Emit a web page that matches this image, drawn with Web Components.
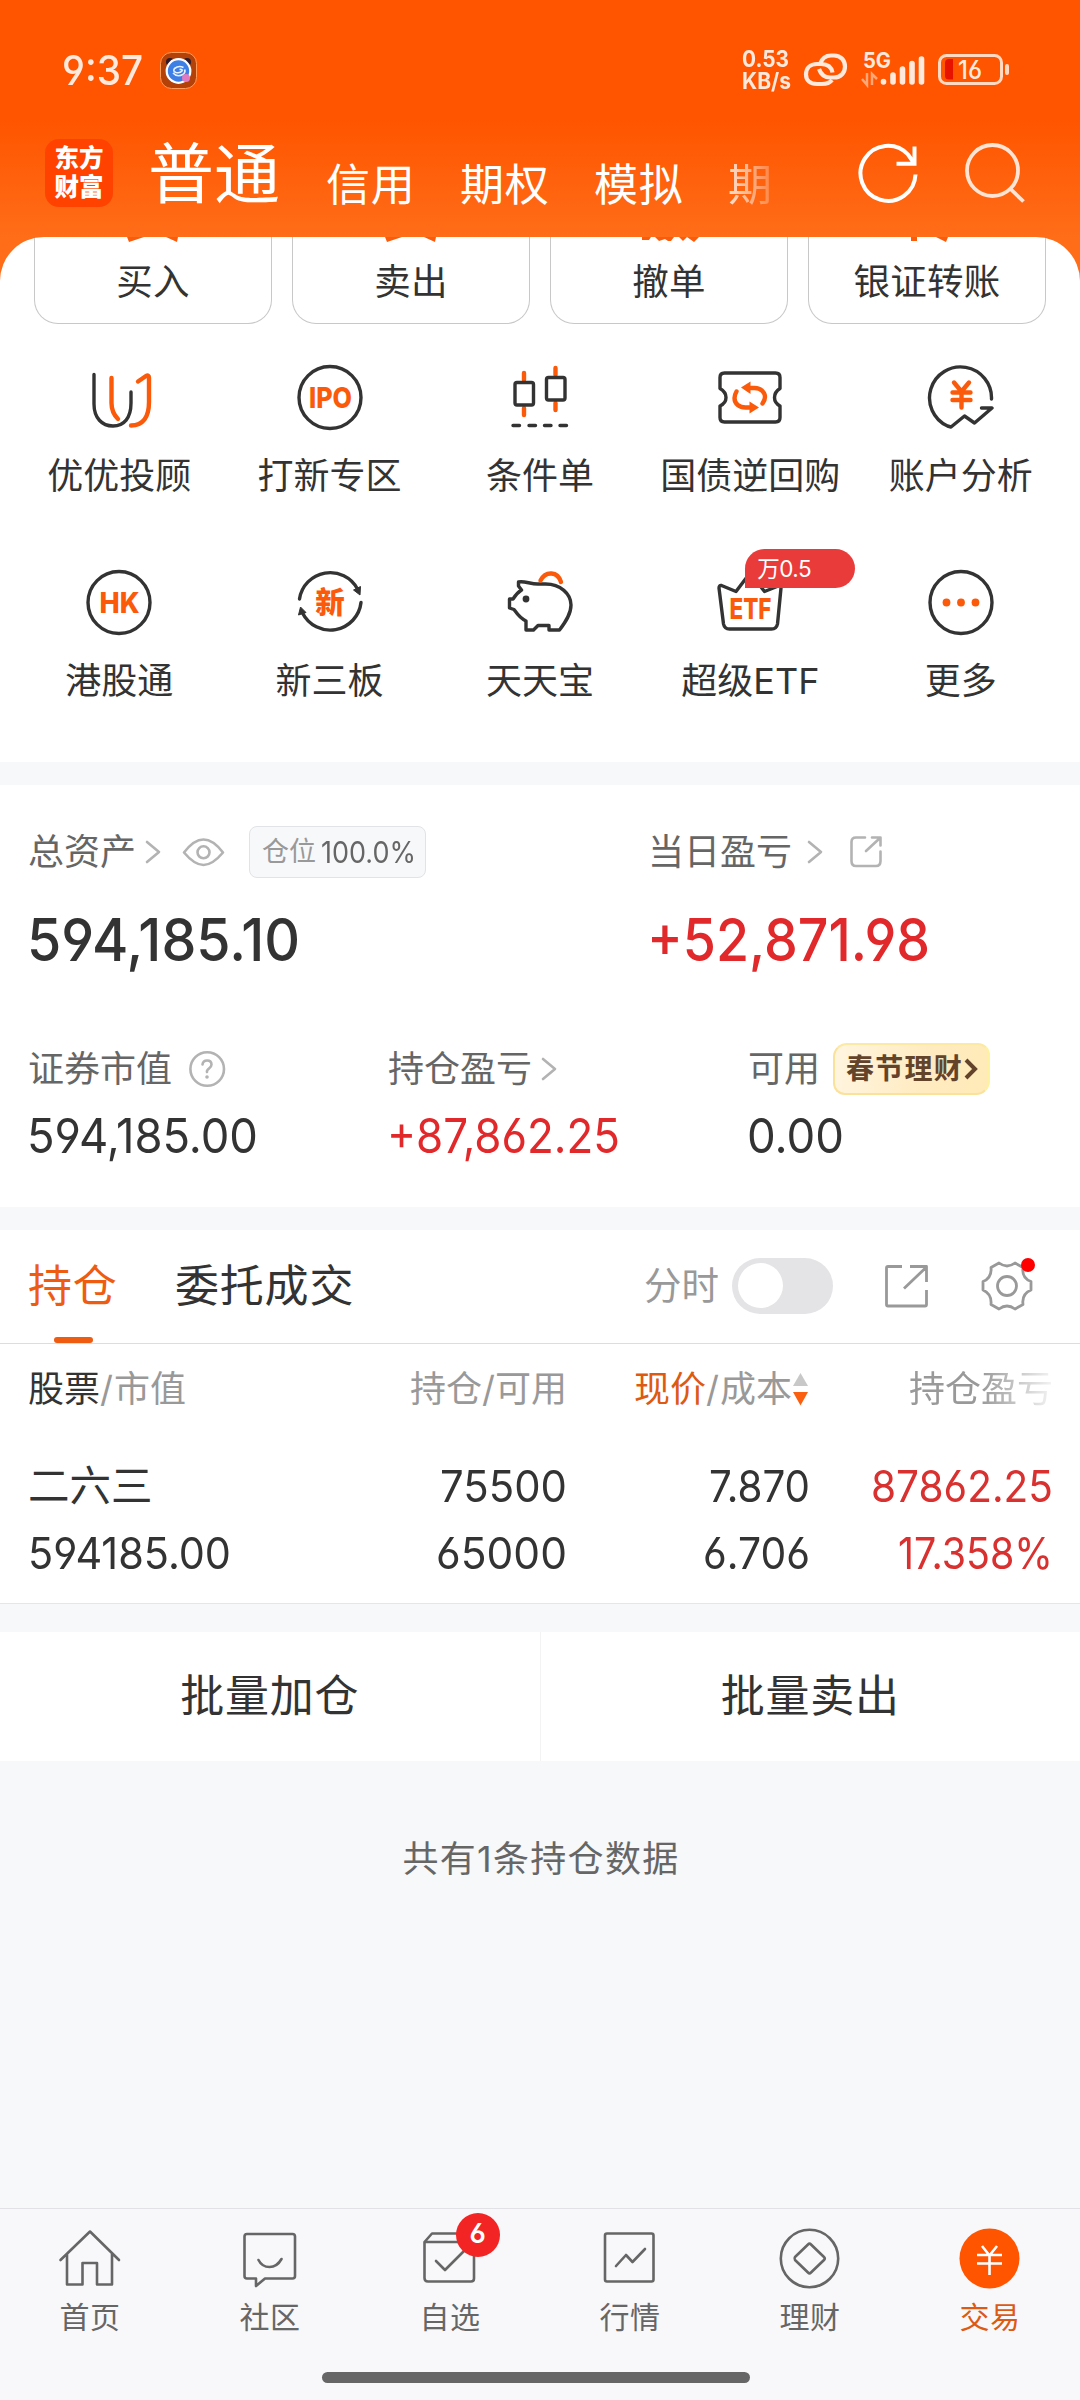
<!DOCTYPE html>
<html lang="zh-CN">
<head>
<meta charset="utf-8">
<title>交易</title>
<style>
html,body{margin:0;padding:0}
body{width:1080px;height:2400px;overflow:hidden;background:#f7f8fa;color:#333;font-family:Inter,"Noto Sans CJK SC",sans-serif;font-size:36px;line-height:48px;font-feature-settings:"cv03","cv04"}
</style>
</head>
<body>
<trade-app></trade-app>
<script>
const define = (name, css, html, extra) => {
  customElements.define(name, class extends HTMLElement {
    constructor() {
      super();
      this.attachShadow({ mode: 'open' }).innerHTML =
        '<style>:host{display:block;box-sizing:border-box}*{box-sizing:border-box}' + css + '</style>' +
        (typeof html === 'function' ? html(this) : html);
    }
    connectedCallback() { if (extra) extra(this); }
  });
};

/* Text run fitted to the advance in its w attribute: Latin text that is too wide
   is condensed, anything else has its letter spacing adjusted. */
define('fit-text', ':host{display:inline-block;white-space:nowrap}span{display:inline-block;transform-origin:0 50%}', '<span><slot></slot></span>', el => {
  const w = +el.getAttribute('w');
  if (el.hasAttribute('size')) el.style.fontSize = el.getAttribute('size') + 'px';
  if (!w) return;
  const r = document.createRange();
  r.selectNodeContents(el);
  const text = el.textContent;
  const natural = r.getBoundingClientRect().width;
  if (natural > w && !/[\u4e00-\u9fff]/.test(text)) {
    el.shadowRoot.querySelector('span').style.transform = `scaleX(${(w / natural).toFixed(4)})`;
  } else {
    el.style.letterSpacing = ((w - natural) / text.length).toFixed(3) + 'px';
  }
  el.style.width = w + 'px';
});

const D = 'fill="none" stroke="#333" stroke-width="3.4" stroke-linecap="round" stroke-linejoin="round"';
const O = 'fill="none" stroke="#fa5a0a" stroke-width="4.4" stroke-linecap="round" stroke-linejoin="round"';
const G = 'fill="none" stroke="#666" stroke-width="2.6" stroke-linecap="round" stroke-linejoin="round"';
const L = 'fill="none" stroke="#b3b3b3" stroke-width="2.6" stroke-linecap="round" stroke-linejoin="round"';
const T = 'fill="#fa5a0a" font-family="Inter,Noto Sans CJK SC,sans-serif" font-weight="800" text-anchor="middle" lengthAdjust="spacingAndGlyphs"';
const ICONS = {
  advisor: ['83 362 70 70', `<path ${D} d="M93 374.500V404C93 418 101 426 112 426S130 418 130 403V392"/><path ${O} d="M110.500 378V403C110.500 410 112 414 117 419M137 381.500L145 376Q148 374.500 148 378V402C148 417 142 425.500 130 425.500"/>`],
  ipo: ['293.500 362 70 70', `<circle ${D} cx="328.500" cy="397.500" r="31"/><text ${T} x="329" y="408" font-size="28.500" textLength="43">IPO</text>`],
  cond: ['504.500 362 70 70', `<path ${O} d="M523.500 373V380M523.500 408V415M555 368V375M555 403V410"/><rect ${D} x="514.500" y="382.500" width="18.500" height="22.500" rx="2"/><rect ${D} x="546" y="377.500" width="18.500" height="22.500" rx="2"/><path ${D} d="M512.500 425.500H519M528.500 425.500H535M544 425.500H550.500M559.500 425.500H566"/>`],
  repo: ['714.500 362 70 70', `<path ${D} d="M724 373H775Q779.500 373 779.500 377.500V388.500Q774 392 774 397.500T779.500 406V417.500Q779.500 422 775 422H724Q719.500 422 719.500 417.500V406Q725.500 403 725.500 397.500T719.500 388.500V377.500Q719.500 373 724 373Z"/><path ${O} d="M750 388H754C761 388 764.500 393 764.500 397Q764.500 400 762 403.500M736 391.500Q734 395 734 398C734 404 739 407.500 745 407.500H749"/><path fill="#fa5a0a" d="M740.500 387.500L750 381.500V394ZM758.500 407.500L749 401.500V413.500Z"/>`],
  analysis: ['924.500 362 70 70', `<path ${D} d="M990 399A31 31 0 1 0 946 426L949.500 427L963 416L973 423L990.500 408H980"/><path ${O} d="M952.500 382.500L960 391.500L967.500 382.500M951 392.500H969M951 400H969M960 392V407.500"/>`],
  hk: ['83.500 567 70 70', `<circle ${D} cx="118.500" cy="602.500" r="31"/><text ${T} x="119" y="613" font-size="28.500" textLength="40">HK</text>`],
  newthree: ['293.500 567 70 70', `<path ${D} d="M298 599A31 31 0 0 1 356 589M359.500 602.500A31 31 0 0 1 301 613"/><path fill="#333" stroke="#333" stroke-linejoin="round" d="M352 590L359 586.500L358.500 595ZM297 615L299 607L304.500 612.500Z"/><text ${T} x="328.500" y="612.500" font-size="29.500">新</text>`],
  piggy: ['504.500 567 70 70', `<path ${D} d="M521 590L518 586V582C523 580.500 530 584 537 584H545C560 584 570.500 594 570.500 605C570.500 614 565 622 559 630H548.500V625.500H537.500L533 630H525.500V621C519 618 516 613 513.500 609.500L509 608V599H512.500C515 595 517 592.500 521 590Z"/><circle cx="525.500" cy="599" r="3.400" fill="#333"/><path ${O} d="M540 580.500Q544 573 551 573.500T560.500 582"/>`],
  etf: ['714.500 567 70 70', `<path ${D} d="M721 585.500L735.500 591.500L749.500 573L764 591.500L779 585.500Q781 585.500 780.500 588L777 624Q776 629 771 629H729Q724 629 723 624L718.500 588Q718.500 585 721 585.500Z"/><text ${T} x="750" y="618.500" font-size="29" textLength="42">ETF</text>`],
  more: ['924.500 567 70 70', `<circle ${D} cx="959.500" cy="602.500" r="31"/><g fill="#fa5a0a"><circle cx="945" cy="602.500" r="3.900"/><circle cx="959.500" cy="602.500" r="3.900"/><circle cx="974" cy="602.500" r="3.900"/></g>`],
  home: ['56 2226 68 64', `<path ${G} d="M60.500 2260L90 2231.500L119 2260M67 2254V2284.500H82.500V2263H97V2284.500H112V2254"/>`],
  social: ['236 2226 68 64', `<path ${G} d="M247 2234H292.500Q295 2234 295 2236.500V2276Q295 2278.500 292.500 2278.500H265L256 2286V2278.500H247Q244.500 2278.500 244.500 2276V2236.500Q244.500 2234 247 2234M258.500 2260Q262 2267 269.500 2267T281.500 2259"/>`],
  watch: ['416 2226 68 64', `<path ${G} d="M424.500 2242L432 2233.500H467L474 2242V2278.500Q474 2281.500 471 2281.500H428Q424.500 2281.500 424.500 2278Z M424.500 2242H474M436 2261L445 2270L467 2248"/>`],
  market: ['596 2226 68 64', `<rect ${G} x="605" y="2233.500" width="48.500" height="48" rx="2"/><path ${G} d="M616 2266L626 2255L632.500 2262L645 2249"/>`],
  wealth: ['776 2226 68 64', `<circle ${G} cx="809.500" cy="2258.500" r="28.700"/><path ${G} d="M808 2244.500Q809.500 2243 811 2244.500L824 2257Q825.500 2258.500 824 2260L811 2272.500Q809.500 2274 808 2272.500L795 2260Q794 2258.500 795 2257Z"/>`],
  trade: ['956 2226 68 64', `<circle cx="989.500" cy="2258.500" r="30" fill="#ff5500"/><path fill="none" stroke="#fff" stroke-width="2.600" d="M982 2246L989.500 2255.500L997 2246M977 2255H1002M977 2263.500H1002M989.500 2255V2275"/>`],
  chevron: ['144 838 18 28', `<path ${L} d="M147 842L159 852L147 862"/>`],
  eye: ['180 834 46 34', `<path ${L} d="M184 851.500C192 841 198 838.500 203.500 838.500S215 841 223 851.500C215 861 209 864 203.500 864S192 861 184 851.500Z"/><circle ${L} cx="203.500" cy="851.300" r="6"/>`],
  share: ['848 835 36 36', `<path ${L} d="M865 838.500H856Q851.500 838.500 851.500 843V862Q851.500 867 856 867H876Q880.500 867 880.500 862V852.500M866 852L880 839M872 838.500H880.500V846.500"/>`],
  help: ['188 1048 40 40', `<circle ${L} cx="207.200" cy="1068" r="16.800"/><path ${L} d="M202.500 1063.500Q203 1059.500 207.200 1059.500T211.500 1063.500Q211.500 1065.500 209 1067.500T207 1071"/><circle cx="207" cy="1076" r="1.800" fill="#b3b3b3"/>`],
  bigshare: ['882 1262 50 48', `<path fill="none" stroke="#999" stroke-width="2.800" stroke-linejoin="round" d="M902 1266.500H888Q886.500 1266.500 886.500 1268V1304.500Q886.500 1306 888 1306H925Q926.500 1306 926.500 1304.500V1290M904 1288.500L926 1267.500M910 1266.500H926.500V1282"/>`],
  gear: ['978 1256 60 60', `<path fill="none" stroke="#999" stroke-width="2.800" stroke-linejoin="round" d="M999 1263Q1007 1269 1015 1263L1023 1267.500Q1021.500 1278 1031 1281.500V1290Q1021.500 1294 1023 1304.500L1015 1309Q1007 1303 999 1309L991 1304.500Q992 1294 983 1290V1281.500Q992 1278 991 1267.500Z"/><circle cx="1007" cy="1286" r="9.500" fill="none" stroke="#999" stroke-width="2.800"/><circle cx="1028" cy="1265" r="7" fill="#f00"/>`],
  sort: ['793 1371 18 36', `<path fill="#c8c8c8" d="M801.500 1373L809 1386H794Z"/><path fill="#fb5f10" d="M801.500 1405.500L809 1392H794Z"/>`],
  refresh: ['856 141 64 66', `<path fill="none" stroke="#fff" stroke-width="4" d="M915.500 174.500A27.500 27.500 0 1 1 908 154.500L914 163M896.500 163.800H914.500V146.500"/>`],
  search: ['963 141 64 66', `<g fill="none" stroke="#ffe3d3" stroke-width="3.800"><circle cx="992.500" cy="170.500" r="25.500"/><path d="M1010.500 189L1023.500 201.500"/></g>`],
  pet: ['160 51 38 39', `<rect x="160.500" y="52.500" width="36" height="36" rx="11" fill="#b44208" stroke="#ff9c5c"/><circle cx="170" cy="62" r="4" fill="#2d1a2c"/><circle cx="187" cy="62" r="4" fill="#2d1a2c"/><circle cx="178.500" cy="71" r="11.800" fill="#3e7fe6" stroke="#fff" stroke-width="2.200"/><path fill="none" stroke="#e6f2ff" stroke-width="1.600" d="M183.500 67.500Q179 65 174.500 68.500Q172.500 71.500 176 72.500Q180 73.500 182 71Q183 69 179.500 69.500M173 73Q177 77.500 183 74.500Q186 72 184.500 69.500"/><circle cx="186" cy="78" r="4" fill="#e27abf"/>`],
  link: ['800 50 50 40', `<g fill="none" stroke="#ffe9dc" stroke-width="4.200" stroke-linecap="butt"><path d="M819 64Q822 55.500 830 55.500H833C840 55.500 844 60.500 844 66.500S840 77.500 833 77.500H829Q821 77.500 818 69"/><path d="M831.500 72.500Q830 64 820 64H816C809 64 805 68.500 805 74.500S809 84 816 84H821Q828 84 831 80"/></g>`],
  signal: ['858 40 68 48', `<text x="876" y="67.500" font-family="Inter,sans-serif" font-weight="700" font-size="21.500" textLength="28" lengthAdjust="spacingAndGlyphs" text-anchor="middle" fill="#ffe9dc">5G</text><path fill="none" stroke="#ffa777" stroke-width="2.500" d="M866 73V85L861 79M871 85V74L876 79"/><g stroke="#ffe9dc" stroke-width="5.600" stroke-linecap="round"><path d="M882.500 81.500V82M892 75V82M901.500 69V82M911 63.500V82M920.500 59V82"/></g>`],
  battery: ['936 50 76 40', `<rect x="939.500" y="55.500" width="62" height="28" rx="7" fill="none" stroke="#ffd9c2" stroke-width="3"/><rect x="1005" y="64" width="4" height="11" rx="2" fill="#ffd9c2"/><path fill="#e81200" d="M949 59H953V79.500H949Q945 79.500 945 76V63Q945 59 949 59Z"/><text x="970" y="78.500" font-family="Inter,sans-serif" font-weight="500" font-size="25" text-anchor="middle" textLength="24" lengthAdjust="spacingAndGlyphs" fill="#ffe9dc">16</text>`]
};
define('ui-icon', ':host{display:inline-block;flex:none}svg{display:block}', el => {
  const [box, body] = ICONS[el.getAttribute('name')];
  const [, , w, h] = box.split(' ');
  return `<svg viewBox="${box}" width="${w}" height="${h}">${body}</svg>`;
});

define('status-bar', `
:host{height:114px;padding:0 71px 0 62px;display:flex;align-items:flex-start;color:#ffe9dc}
.time{font-weight:500;line-height:40px;margin:50px 17px 0 0}
.net{font-weight:700;font-size:22.500px;line-height:21.500px;margin:48px 10px 0 auto;display:flex;flex-direction:column}
ui-icon{margin-top:50px}.pet{margin-top:51px}.sig{margin:40px 9px 0 0}`,
`<fit-text class="time" size="41" w="81">9:37</fit-text><ui-icon class="pet" name="pet"></ui-icon>
<div class="net"><fit-text w="47">0.53</fit-text><fit-text w="49">KB/s</fit-text></div>
<ui-icon name="link" style="margin-right:8px"></ui-icon><ui-icon name="signal" class="sig"></ui-icon><ui-icon name="battery" style="margin-right:-3px"></ui-icon>`);

define('account-tabs', `
:host{height:123px;display:flex;align-items:flex-start;padding:0 53px 0 45px;color:#fff}
.logo{width:68px;height:68px;margin-top:25px;border-radius:14px;background:#ff4200;font-weight:900;font-size:24.500px;line-height:29px;text-align:center;padding-top:5px;flex:none}
.tabs{display:flex;width:664px;margin-left:35px;height:123px;font-size:44px}
.big{font-size:66px;line-height:80px;margin-top:20px;width:134px;font-weight:400}
.tab{line-height:60px;margin:41px 0 0 44px;white-space:nowrap;width:90px;letter-spacing:.8px}
.fade{width:46px;-webkit-mask-image:linear-gradient(90deg,rgba(0,0,0,.8),rgba(0,0,0,.25) 90%)}
ui-icon{margin-top:27px}`,
`<div class="logo">东方<br>财富</div>
<div class="tabs"><span class="big">普通</span><span class="tab">信用</span><span class="tab">期权</span><span class="tab">模拟</span><span class="tab fade">期</span></div>
<ui-icon name="refresh" style="margin-left:44px"></ui-icon><ui-icon name="search" style="margin-left:43px"></ui-icon>`);

define('app-header', `:host{height:290px;background:linear-gradient(#ff5500 0,#ff5500 120px,#ff6d18 237px,#ff6d18 100%)}`,
`<status-bar></status-bar><account-tabs></account-tabs>`);

define('order-card', `
:host{width:238px;height:87px;border:1px solid #c8c8c8;border-top:0;border-radius:0 0 24px 24px;text-align:center;position:relative}
.label{padding-top:21px;font-size:36.500px;letter-spacing:.3px}
svg{position:absolute;left:0;top:0}`,
el => `<svg width="236" height="6"><path fill="#fb5c0c" d="${el.getAttribute('mark')}"/></svg><div class="label"><slot></slot></div>`);

define('tool-item', `
:host{width:210.400px;height:205px;display:flex;flex-direction:column;align-items:center;position:relative}
.label{margin-top:20px;white-space:nowrap}
::slotted(tool-badge){position:absolute;left:100px;top:-18px}`,
el => `<ui-icon name="${el.getAttribute('icon')}"></ui-icon><div class="label">${el.getAttribute('label')}</div><slot></slot>`);
define('tool-badge', `:host{width:110px;height:39px;border-radius:20px 20px 20px 0;background:#ea3b3b;color:#fff;font-size:22.500px;line-height:39px;padding-left:12px}`, '<slot></slot>');

define('quick-panel', `
:host{height:525px;margin-top:-53px;background:#fff;border-radius:44px 44px 0 0;overflow:hidden;position:relative}
.cards{display:flex;gap:20px;padding-left:34px}
.tools{display:grid;grid-template-columns:repeat(5,210.400px);padding:38px 0 0 14px}`,
`<div class="cards">
<order-card mark="M92 0H109L94 5ZM131 0H143L142 5Z">买入</order-card><order-card mark="M92 0H109L94 5ZM131 0H143L142 5Z">卖出</order-card><order-card mark="M91 0H100L98 3H91ZM104 0H123L120 4H117L114 2L108 4ZM128 0H148L143 5L136 0L132 4Z">撤单</order-card><order-card mark="M102 0H108V4H102ZM127 0H139L137 5Z">银证转账</order-card></div>
<div class="tools"><tool-item icon="advisor" label="优优投顾"></tool-item><tool-item icon="ipo" label="打新专区"></tool-item><tool-item icon="cond" label="条件单"></tool-item><tool-item icon="repo" label="国债逆回购"></tool-item><tool-item icon="analysis" label="账户分析"></tool-item>
<tool-item icon="hk" label="港股通"></tool-item><tool-item icon="newthree" label="新三板"></tool-item><tool-item icon="piggy" label="天天宝"></tool-item><tool-item icon="etf" label="超级ETF"><tool-badge><fit-text w="54">万0.5</fit-text></tool-badge></tool-item><tool-item icon="more" label="更多"></tool-item></div>`);

define('asset-panel', `
:host{height:422px;margin-top:23px;background:#fff;color:#666;padding-left:28px}
.row{display:flex}.line{display:flex;align-items:center;height:52px;white-space:nowrap}
.top{padding-top:41px}.top>:first-child{width:620px}
.low{padding-top:73px}.low>:nth-child(-n+2){width:360px}
.num{display:block;font-weight:500;line-height:60px;margin:32px 0 0 -1px;color:#333}
.val{display:block;line-height:48px;margin:17px 0 0 -1px;color:#333}
.red{color:#e1282a}
.tag{display:flex;align-items:center;width:177px;height:52px;margin:0 0 0 23px;border:1px solid #e2e3e6;border-radius:8px;background:#f7f8fa;padding-left:12px;font-size:27px;color:#999}
.tag fit-text{color:#666;margin-left:5px}
.promo{display:flex;align-items:center;width:157px;height:52px;margin-left:13px;padding-left:11px;border:2.500px solid #fae29a;border-top-color:#fbe9a4;border-right-color:#fcf2a0;border-radius:14px 12px 14px 12px;background:linear-gradient(100deg,#fff5e0,#ffebc0 60%,#ffeab8);color:#63432a;font-weight:700;font-size:28px}`,
`<div class="row top"><div><div class="line">总资产<ui-icon name="chevron" style="margin-left:8px"></ui-icon><ui-icon name="eye" style="margin-left:18px"></ui-icon><span class="tag">仓位<fit-text size="29.500" w="95">100.0%</fit-text></span></div><fit-text class="num" size="59" w="273">594,185.10</fit-text></div>
<div><div class="line">当日盈亏<ui-icon name="chevron" style="margin-left:14px"></ui-icon><ui-icon name="share" style="margin-left:24px"></ui-icon></div><fit-text class="num red" size="59" w="283">+52,871.98</fit-text></div></div>
<div class="row low"><div><div class="line">证券市值<ui-icon name="help" style="margin-left:16px"></ui-icon></div><fit-text class="val" size="48" w="231">594,185.00</fit-text></div>
<div><div class="line">持仓盈亏<ui-icon name="chevron" style="margin-left:8px"></ui-icon></div><fit-text class="val red" size="48" w="233">+87,862.25</fit-text></div>
<div><div class="line">可用<span class="promo"><fit-text w="117">春节理财</fit-text><svg width="16" height="26" viewBox="0 0 16 26"><path d="M3 4L12 13L3 22" fill="none" stroke="#63432a" stroke-width="4"/></svg></span></div><fit-text class="val" size="48" w="97">0.00</fit-text></div></div>`);

define('toggle-switch', `:host{width:101px;height:56px;border-radius:28px;background:#e4e4e6;padding:5.500px 6px;flex:none}i{display:block;width:45px;height:45px;border-radius:50%;background:#fff}`, '<i></i>');

define('position-tabs', `
:host{height:114px;border-bottom:1px solid #ddd;display:flex;align-items:center;padding:0 42px 2px 28px;font-size:44px;white-space:nowrap;letter-spacing:.8px}
.on{color:#ee5c12;position:relative;width:90px}
.on::after{content:"";position:absolute;left:26px;top:75px;width:39px;height:6px;border-radius:3px;background:#ee5c12}
.all{margin-left:57px}.time{margin-left:auto;color:#999;font-size:37.500px;letter-spacing:0}
toggle-switch{margin-left:13px}`,
`<span class="on">持仓</span><span class="all">委托成交</span><span class="time">分时</span><toggle-switch></toggle-switch><ui-icon name="bigshare" style="margin-left:49px"></ui-icon><ui-icon name="gear" style="margin-left:46px"></ui-icon>`);

define('holding-table', `
:host{height:260px;border-bottom:1px solid #e6e6e6;padding:20px 0 0 28px}
.g{display:grid;grid-template-columns:298px 241px 243px 243px;white-space:nowrap}
.g>*{justify-self:end}.g>:first-child{justify-self:start}
.head{height:48px;color:#999;margin-top:1px}.head b{font-weight:400;color:#333}.head .o{color:#dc5a14}
.price{display:flex;align-items:center}
.fade{-webkit-mask-image:linear-gradient(90deg,#000 50%,rgba(0,0,0,.1) 100%)}
.r{height:67px;line-height:67px}.r1{margin-top:40px}.red{color:#d93030}.name{font-size:41.500px}`,
`<div class="g head"><span><b>股票</b><fit-text w="14">/</fit-text>市值</span><span>持仓<fit-text w="13">/</fit-text>可用</span><span class="price"><span class="o">现价</span><fit-text w="14">/</fit-text>成本<ui-icon name="sort"></ui-icon></span><span class="fade">持仓盈亏</span></div>
<div class="g r r1"><span class="name">二六三</span><fit-text size="43.500" w="127">75500</fit-text><fit-text size="43.500" w="101">7.870</fit-text><fit-text class="red" size="43.500" w="182">87862.25</fit-text></div>
<div class="g r"><fit-text size="43.500" w="203">594185.00</fit-text><fit-text size="43.500" w="131">65000</fit-text><fit-text size="43.500" w="107">6.706</fit-text><fit-text class="red" size="43.500" w="155">17.358%</fit-text></div>`);

define('position-panel', `:host{height:374px;margin-top:23px;background:#fff}`, `<position-tabs></position-tabs><holding-table></holding-table>`);

define('batch-actions', `
:host{display:flex;height:129px;margin-top:28px;background:#fff;font-size:44px;letter-spacing:.8px;line-height:128px;text-align:center}
div{flex:1}div:first-of-type{border-right:1px solid #f3f3f4}`, `<div>批量加仓</div><div>批量卖出</div>`);

define('list-note', `:host{height:447px;padding:74px 0 0 2px;color:#666;text-align:center}`, `<fit-text w="277">共有1条持仓数据</fit-text>`);

define('nav-item', `
:host{flex:1;display:flex;flex-direction:column;align-items:center;position:relative;color:#666;font-size:30px;letter-spacing:.5px}
:host([active]){color:#dc5a14}.label{line-height:40px;margin-top:7px}
::slotted(nav-badge){position:absolute;left:96px;top:-13px}`,
el => `<ui-icon name="${el.getAttribute('icon')}"></ui-icon><span class="label">${el.getAttribute('label')}</span><slot></slot>`);
define('nav-badge', `:host{width:44px;height:44px;border-radius:50%;background:#f32424;color:#fff;font-size:27px;font-weight:600;line-height:42px;text-align:center}`, '<slot></slot>');

define('bottom-nav', `
:host{height:192px;border-top:1px solid #e2e2e6;background:#f8f8fb;padding-top:17px}
.items{display:flex;height:146px}.bar{width:428px;height:11px;border-radius:6px;background:#666;margin:0 0 0 322px}`,
`<div class="items"><nav-item icon="home" label="首页"></nav-item><nav-item icon="social" label="社区"></nav-item><nav-item icon="watch" label="自选"><nav-badge>6</nav-badge></nav-item><nav-item icon="market" label="行情"></nav-item><nav-item icon="wealth" label="理财"></nav-item><nav-item icon="trade" label="交易" active></nav-item></div><div class="bar"></div>`);

define('trade-app', `:host{width:1080px;height:2400px;background:#f7f8fa;overflow:hidden}`,
`<app-header></app-header><quick-panel></quick-panel><asset-panel></asset-panel><position-panel></position-panel><batch-actions></batch-actions><list-note></list-note><bottom-nav></bottom-nav>`);
</script>
</body>
</html>
